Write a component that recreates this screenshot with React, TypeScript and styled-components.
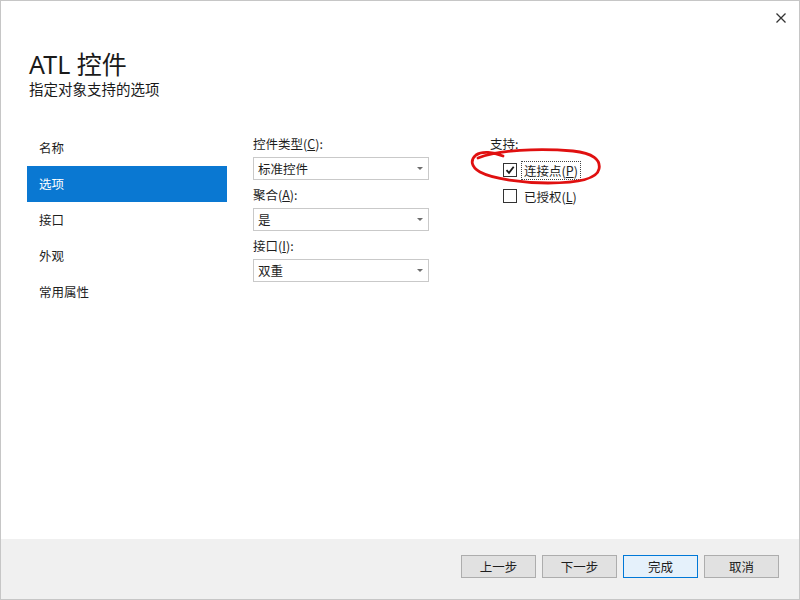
import React from "react";
import styled, { createGlobalStyle } from "styled-components";

const GlobalStyle = createGlobalStyle`
    html, body {
        margin: 0;
        padding: 0;
        background: #ffffff;
    }
    body {
        font-family: "Noto Sans", "Noto Sans CJK SC", sans-serif;
        font-size: 12px;
        color: #1e1e1e;
    }
`;

const Window = styled.div`
    position: relative;
    box-sizing: border-box;
    width: 800px;
    height: 600px;
    border: 1px solid #c6c6c6;
    background: #ffffff;
    display: flex;
    flex-direction: column;
`;

const CloseButton = styled.div`
    position: absolute;
    top: 9px;
    right: 10px;
    width: 16px;
    height: 16px;
    display: flex;
    align-items: center;
    justify-content: center;
`;

const Header = styled.div`
    padding: 48px 0 0 28px;
    height: 81px;
`;

const Title = styled.div`
    font-family: "Noto Sans", "Noto Sans CJK SC", sans-serif;
    font-size: 25px;
    line-height: 30px;
    color: #1a1a1a;
`;

const Subtitle = styled.div`
    font-family: "Noto Sans CJK SC", sans-serif;
    font-size: 14.5px;
    line-height: 18px;
    color: #1a1a1a;
    margin-top: 1px;
`;

const Body = styled.div`
    flex: 1;
    display: flex;
    padding: 0 0 0 26px;
    position: relative;
`;

const Nav = styled.div`
    width: 200px;
    display: flex;
    flex-direction: column;
`;

const NavItem = styled.div<{ selected?: boolean }>`
    height: 36px;
    line-height: 36px;
    padding-left: 12px;
    font-family: "Noto Sans CJK SC", sans-serif;
    font-size: 12.5px;
    background: ${(p) => (p.selected ? "#0a78d2" : "transparent")};
    color: ${(p) => (p.selected ? "#ffffff" : "#1e1e1e")};
`;

const MiddleColumn = styled.div`
    margin: 4px 0 0 26px;
    width: 176px;
    display: flex;
    flex-direction: column;
`;

const FieldLabel = styled.div`
    font-family: "Noto Sans CJK SC", sans-serif;
    font-size: 12.5px;
    height: 23px;
    line-height: 20px;
    color: #1e1e1e;
    u { text-decoration: underline; }
`;

const Field = styled.div`
    margin-bottom: 5px;
`;

const Select = styled.div`
    box-sizing: border-box;
    height: 23px;
    border: 1px solid #c9c9c9;
    background: #ffffff;
    display: flex;
    align-items: center;
    justify-content: space-between;
    padding: 0 4px 0 4px;
    font-family: "Noto Sans CJK SC", sans-serif;
    font-size: 12.5px;
    color: #1e1e1e;
`;

const Arrow = styled.div`
    width: 0;
    height: 0;
    margin-right: 1px;
    border-left: 3px solid transparent;
    border-right: 3px solid transparent;
    border-top: 3px solid #6d6d6d;
`;

const RightColumn = styled.div`
    margin: 4px 0 0 61px;
    display: flex;
    flex-direction: column;
    position: relative;
`;

const CheckRow = styled.div`
    display: flex;
    align-items: center;
    height: 26px;
    margin-left: 13px;
`;

const Box = styled.div`
    box-sizing: border-box;
    width: 14px;
    height: 14px;
    border: 1px solid #333333;
    background: #ffffff;
    display: flex;
    align-items: center;
    justify-content: center;
`;

const CheckText = styled.div<{ focused?: boolean }>`
    margin-left: 5px;
    padding: 0 2px;
    height: 17px;
    line-height: 17px;
    font-family: "Noto Sans CJK SC", sans-serif;
    font-size: 12.5px;
    color: #1e1e1e;
    outline: ${(p) => (p.focused ? "1px dotted #444444" : "none")};
    outline-offset: 0;
`;

const Scribble = styled.svg`
    position: absolute;
    left: -22px;
    top: 12px;
    pointer-events: none;
`;

const Footer = styled.div`
    height: 60px;
    background: #f0f0f0;
    display: flex;
    justify-content: flex-end;
    align-items: flex-start;
    gap: 6px;
    padding: 16px 20px 0 0;
    box-sizing: border-box;
`;

const Button = styled.div<{ primary?: boolean }>`
    box-sizing: border-box;
    width: 75px;
    height: 23px;
    border: 1px solid ${(p) => (p.primary ? "#0078d7" : "#adadad")};
    background: ${(p) => (p.primary ? "#e5f1fb" : "#e1e1e1")};
    display: flex;
    align-items: center;
    justify-content: center;
    font-family: "Noto Sans CJK SC", sans-serif;
    font-size: 12.5px;
    color: #1e1e1e;
`;

const navItems = ["名称", "选项", "接口", "外观", "常用属性"];

const fields = [
    { label: <>控件类型(<u>C</u>):</>, value: "标准控件" },
    { label: <>聚合(<u>A</u>):</>, value: "是" },
    { label: <>接口(<u>I</u>):</>, value: "双重" },
];

export default function App() {
    return (
        <>
            <GlobalStyle />
            <Window>
                <CloseButton>
                    <svg width="10" height="10" viewBox="0 0 10 10">
                        <path d="M0.5 0.5 L9.5 9.5 M9.5 0.5 L0.5 9.5" stroke="#333" strokeWidth="1.3" />
                    </svg>
                </CloseButton>
                <Header>
                    <Title>ATL 控件</Title>
                    <Subtitle>指定对象支持的选项</Subtitle>
                </Header>
                <Body>
                    <Nav>
                        {navItems.map((item) => (
                            <NavItem key={item} selected={item === "选项"}>{item}</NavItem>
                        ))}
                    </Nav>
                    <MiddleColumn>
                        {fields.map((f, i) => (
                            <Field key={i}>
                                <FieldLabel>{f.label}</FieldLabel>
                                <Select>
                                    <span>{f.value}</span>
                                    <Arrow />
                                </Select>
                            </Field>
                        ))}
                    </MiddleColumn>
                    <RightColumn>
                        <FieldLabel>支持:</FieldLabel>
                        <CheckRow>
                            <Box>
                                <svg width="10" height="10" viewBox="0 0 10 10">
                                    <path d="M1.5 5.2 L4 7.8 L8.7 1.8" stroke="#1a1a1a" strokeWidth="1.8" fill="none" />
                                </svg>
                            </Box>
                            <CheckText focused>连接点(<u>P</u>)</CheckText>
                        </CheckRow>
                        <CheckRow>
                            <Box />
                            <CheckText>已授权(<u>L</u>)</CheckText>
                        </CheckRow>
                        <Scribble width="140" height="48" viewBox="0 0 140 48">
                            <path
                                d="M10 12 C30 4, 70 2, 105 5 C125 7, 133 14, 131 23 C129 33, 110 37, 80 37 C55 37, 25 33, 12 26 C3 21, 2 14, 8 9 C14 5, 25 6, 35 10"
                                stroke="#e01010"
                                strokeWidth="2.8"
                                fill="none"
                                strokeLinecap="round"
                            />
                        </Scribble>
                    </RightColumn>
                </Body>
                <Footer>
                    <Button>上一步</Button>
                    <Button>下一步</Button>
                    <Button primary>完成</Button>
                    <Button>取消</Button>
                </Footer>
            </Window>
        </>
    );
}
